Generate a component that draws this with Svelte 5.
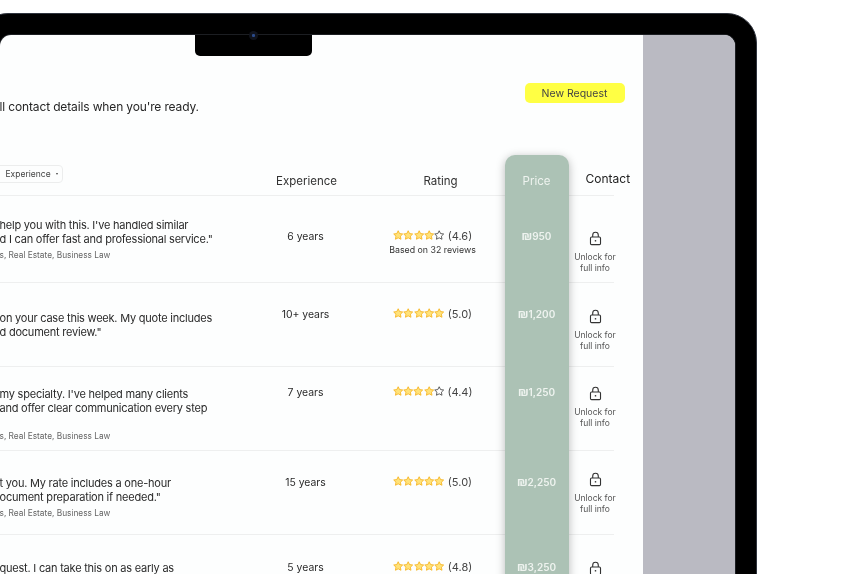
<script>
  const rows = [
    { h: 87, quote: ["help you with this. I've handled similar", "d I can offer fast and professional service.\""], qt: 22, spec: "s, Real Estate, Business Law", st: 4, exp: "6 years", top: 34, stars: 4, score: "(4.6)", reviews: "Based on 32 reviews", price: "950", lock: 35 },
    { h: 84, quote: ["on your case this week. My quote includes", "d document review.\""], qt: 28, spec: "", st: 0, exp: "10+ years", top: 25, stars: 5, score: "(5.0)", reviews: "", price: "1,200", lock: 26 },
    { h: 84, quote: ["my specialty. I've helped many clients", "and offer clear communication every step"], qt: 20, spec: "s, Real Estate, Business Law", st: 16, exp: "7 years", top: 19, stars: 4, score: "(4.4)", reviews: "", price: "1,250", lock: 19 },
    { h: 84, quote: ["t you. My rate includes a one-hour", "ocument preparation if needed.\""], qt: 25, spec: "s, Real Estate, Business Law", st: 4, exp: "15 years", top: 25, stars: 5, score: "(5.0)", reviews: "", price: "2,250", lock: 21 },
    { h: 84, quote: ["quest. I can take this on as early as"], qt: 26, spec: "", st: 0, exp: "5 years", top: 26, stars: 5, score: "(4.8)", reviews: "", price: "3,250", lock: 26 }
  ];
  const star = "M5.5.8l1.45 2.98 3.28.46-2.38 2.3.57 3.26L5.5 8.26 2.58 9.8l.57-3.26-2.38-2.3 3.28-.46z";
</script>

<div class="page">
  <div class="frame">
    <div class="notch"><span class="camera"></span></div>
    <div class="screen">
      <main class="main">
        <div class="top">
          <p class="lead">ll contact details when you're ready.</p>
          <button class="new">New Request</button>
        </div>
        <div class="table">
          <div class="head">
            <div class="filter"><span>Experience</span><i class="caret"></i></div>
            <div class="th exp-h">Experience</div>
            <div class="th">Rating</div>
            <div></div>
            <div class="th contact">Contact</div>
          </div>
          {#each rows as r}
            <div class="row" style="height:{r.h}px">
              <div class="quote" style="padding-top:{r.qt}px">
                {#each r.quote as line}<div class="line">{line}</div>{/each}
                {#if r.spec}<div class="spec" style="margin-top:{r.st}px">{r.spec}</div>{/if}
              </div>
              <div class="exp" style="padding-top:{r.top}px">{r.exp}</div>
              <div class="rating" style="padding-top:{r.top - 1}px">
                <div class="stars">
                  {#each [1, 2, 3, 4, 5] as n}
                    <svg class="star" viewBox="0 0 11 11" width="10.4" height="10.4">
                      {#if n <= r.stars}
                        <path d={star} fill="#ffe27a" stroke="#f6b829" stroke-width="1" />
                      {:else}
                        <path d={star} fill="#fff" stroke="#444" stroke-width=".9" />
                      {/if}
                    </svg>
                  {/each}
                  <span class="score">{r.score}</span>
                </div>
                {#if r.reviews}<div class="reviews">{r.reviews}</div>{/if}
              </div>
              <div></div>
              <div class="unlock" style="padding-top:{r.lock}px">
                <svg viewBox="0 0 14 16" width="13" height="15" fill="none" stroke="#333" stroke-width="1.2">
                  <rect x="1.6" y="6.4" width="10.8" height="8.2" rx="1.2" />
                  <path d="M4 6.4V4.2a3 3 0 0 1 6 0v2.2" />
                  <circle cx="7" cy="10.4" r=".9" fill="#333" stroke="none" />
                </svg>
                <div class="utext">Unlock for<br />full info</div>
              </div>
            </div>
          {/each}
          <div class="band">
            <div class="band-head">Price</div>
            {#each rows as r}
              <div class="band-cell" style="height:{r.h}px;padding-top:{r.top - 1}px"><span class="shekel">₪</span>{r.price}</div>
            {/each}
          </div>
        </div>
      </main>
      <div class="side"></div>
    </div>
  </div>
</div>

<style>
  :global(body) { margin: 0; background: #fff; }
  .page {
    width: 856px; height: 574px; overflow: hidden; background: #fff;
    font-family: Inter, "Liberation Sans", sans-serif; color: #333;
  }
  .frame {
    position: relative;
    box-sizing: border-box;
    width: 779px; height: 640px;
    margin: 13px 0 0 -22px;
    padding: 20.5px 21.5px 20.5px 20.5px;
    background: #000;
    border: 1.5px solid #2f343e;
    border-radius: 30px 30px 0 0;
  }
  .screen {
    display: flex; height: 100%;
    border-radius: 11px 11px 0 0; overflow: hidden;
    background: #fdfefe;
    box-shadow: 0 0 0 1px #1c1e22;
  }
  .notch {
    position: absolute; left: 215.5px; top: 20.5px; z-index: 5;
    width: 117px; height: 21px; background: #000;
    border-radius: 0 0 5px 5px;
  }
  .camera {
    position: absolute; left: 54px; top: -3.5px;
    width: 9px; height: 9px; border-radius: 50%;
    background: radial-gradient(circle, #2a4a8a 0 1.2px, #10131c 2px);
  }
  .main { width: 643px; flex: none; filter: blur(.35px); }
  .side { flex: 1; background: #babac2; }
  .top {
    display: flex; justify-content: space-between; align-items: flex-start;
    height: 120px; box-sizing: border-box;
    padding: 48px 18px 0 0;
  }
  .lead { margin: 16px 0 0; font-size: 12px; letter-spacing: -.14px; line-height: 15px; color: #262626; }
  .new {
    width: 100px; height: 20px; padding: 1px 0 0; border: 0; border-radius: 5px;
    background: #ffff44; color: #444; font: inherit; font-size: 10.5px;
  }
  .table { position: relative; width: 614px; }
  .head, .row {
    display: grid;
    grid-template-columns: 246px 120px 150px 56px 46px;
    box-sizing: border-box;
    border-bottom: 1px solid #eeefef;
  }
  .head { height: 41px; }
  .filter {
    display: flex; align-items: center; gap: 5px;
    align-self: start; margin: 10px 0 0 -6px; width: 69px; height: 18px;
    box-sizing: border-box; padding-left: 11px;
    border: 1px solid #eceded; border-radius: 4px;
    font-size: 8.5px; color: #444;
  }
  .caret {
    width: 0; height: 0;
    border-left: 1.5px solid transparent; border-right: 1.5px solid transparent;
    border-top: 2px solid #444;
  }
  .th { padding-top: 19px; text-align: center; font-size: 11.5px; line-height: 14px; color: #333; }
  .exp-h { padding-left: 2px; }
  .contact { padding-top: 17px; white-space: nowrap; margin-left: 14px; color: #222; font-size: 12px; }
  .quote { font-size: 11px; letter-spacing: -.22px; line-height: 14px; color: #2a2a2a; white-space: nowrap; }
  .spec { font-size: 8.3px; letter-spacing: 0; line-height: 11px; color: #666; }
  .exp { text-align: center; font-size: 10.4px; line-height: 14px; color: #2a2a2a; }
  .rating { padding-right: 16px; text-align: center; }
  .stars { display: flex; justify-content: center; align-items: center; height: 14px; }
  .score { margin-left: 3px; font-size: 11px; color: #444; }
  .reviews { margin-top: 1px; font-size: 8.8px; line-height: 12px; color: #333; }
  .unlock { padding-left: 1px; text-align: center; white-space: nowrap; }
  .unlock svg { display: block; margin: 0 auto; }
  .utext { margin-top: 6px; font-size: 8.5px; line-height: 11px; color: #555; }
  .band {
    position: absolute; left: 505px; top: 0; width: 64px;
    background: #acc2b5; border-radius: 10px 10px 0 0;
    box-shadow: 0 2px 10px rgba(0, 0, 0, .28);
    color: #eef3ef; text-align: center;
  }
  .band-head { height: 41px; padding-top: 19px; box-sizing: border-box; font-size: 11.5px; line-height: 14px; }
  .band-cell { box-sizing: border-box; font-size: 10px; line-height: 14px; font-weight: 600; }
  .shekel { font-size: 12px; }
</style>
